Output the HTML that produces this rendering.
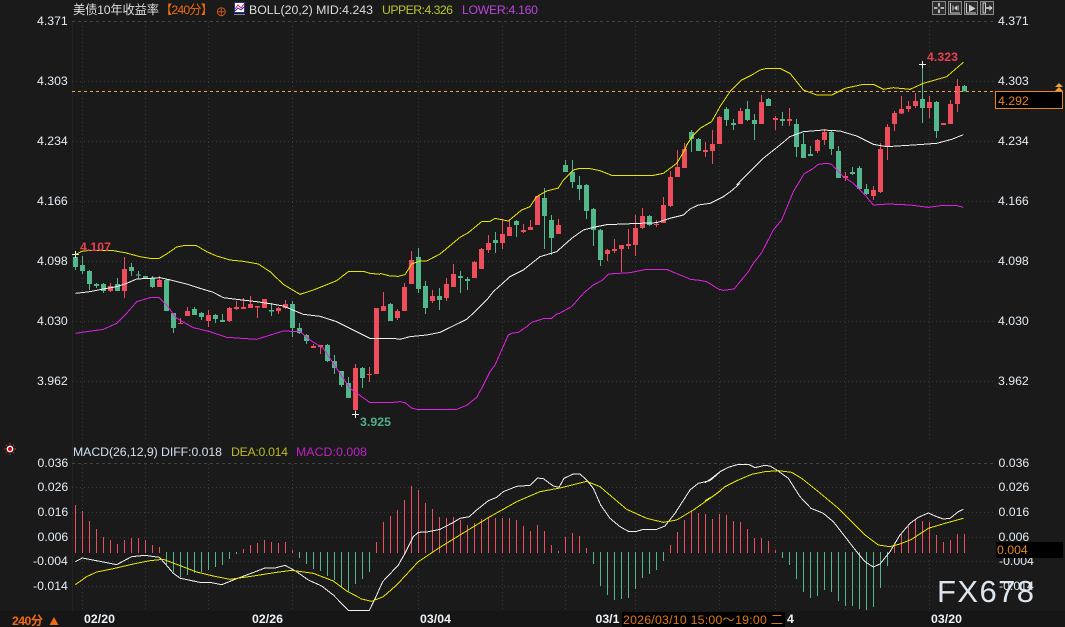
<!DOCTYPE html>
<html lang="zh">
<head>
<meta charset="utf-8">
<title>美债10年收益率</title>
<style>
html,body{margin:0;padding:0;background:#1a1a1a;width:1065px;height:627px;overflow:hidden}
svg{display:block}
text{font-family:"Liberation Sans","Noto Sans CJK SC",sans-serif;font-size:12.3px}
.lab{fill:#e4edf5}
.grid{stroke:#3a3a3a;stroke-width:1;stroke-dasharray:1 3;fill:none}
.w{fill:none;stroke-width:3;shape-rendering:crispEdges}
.b{fill:none;stroke-width:15;shape-rendering:crispEdges}
.bar{fill:none;stroke-width:3;shape-rendering:crispEdges}
.r{stroke:#ee4e5c}
.g{stroke:#52b88b}
.l{fill:none;stroke-width:3;shape-rendering:crispEdges;stroke-linejoin:round}
.lw{stroke:#f0f0f0}
.ly{stroke:#e8e600}
.lm{stroke:#e020e0}
</style>
</head>
<body>
<svg width="1065" height="627" viewBox="0 0 1065 627" xmlns="http://www.w3.org/2000/svg">
<rect width="1065" height="627" fill="#1a1a1a"/>
<rect y="611" width="1065" height="16" fill="#161616"/>
<path d="M72.5 21V611" stroke="#232323" fill="none"/>

<!-- grids -->
<path d="M72 21.5H994" stroke="#444" stroke-dasharray="3 3" fill="none"/>
<path class="grid" d="M72 81.5H994M72 141.5H994M72 201.5H994M72 261.5H994M72 321.5H994M72 381.5H994"/>
<path class="grid" d="M82.5 22V440M145.5 22V440M208.5 22V440M292.5 22V440M418.5 22V440M502.5 22V440M565.5 22V440M635.5 22V440M719.5 22V440M775.5 22V440M845.5 22V440M929.5 22V440"/>
<path d="M72 463.5H994" stroke="#444" stroke-dasharray="3 3" fill="none"/>
<path class="grid" d="M72 487.5H994M72 512.5H994M72 537.5H994M72 561.5H994M72 586.5H994"/>
<path class="grid" d="M82.5 464V611M145.5 464V611M208.5 464V611M292.5 464V611M418.5 464V611M502.5 464V611M565.5 464V611M635.5 464V611M719.5 464V611M775.5 464V611M845.5 464V611M929.5 464V611"/>

<!-- candles group A -->
<g transform="translate(70.1667 230) scale(.33333)">
<path class="w r" d="M121 159V186M163 81V204M268 138V171M331 264V282M352 231V258M415 240V291M478 231V276M499 213V240M520 204V237M541 198V234M562 228V264M583 207V234M625 231V252M646 210V237M730 342V354M751 345V372M856 402V546M898 411V456M919 234V432"/>
<path class="b r" d="M121 168V183M163 117V183M268 150V171M331 279V282M352 243V258M415 255V273M478 234V273M499 231V237M520 231V237M541 222V234M562 228V233M583 207V234M625 234V243M646 222V234M730 348V354M751 345V351M856 414V540M898 432V435M919 234V432"/>
<path class="w g" d="M16 72V120M37 78V132M58 120V180M79 159V174M100 159V189M142 144V183M184 99V138M205 123V147M226 138V147M247 138V174M289 147V243M310 249V309M373 231V255M394 246V270M436 252V279M457 252V276M604 219V258M667 213V321M688 279V312M709 312V342M772 342V396M793 375V432M814 423V471M835 441V504M877 411V474"/>
<path class="b g" d="M16 81V111M37 105V123M58 123V162M79 162V168M100 162V183M142 162V183M184 111V123M205 133V136M226 138V144M247 144V171M289 150V243M310 249V294M373 237V255M394 249V261M436 255V267M457 270V276M604 240V245M667 222V294M688 294V309M709 315V333M772 345V393M793 393V414M814 423V465M835 459V504M877 414V444"/>
</g>
<!-- candles group B -->
<g transform="translate(380.1667 150) scale(.33333)">
<path class="w r" d="M10 426V483M52 477V510M73 399V483M94 303V402M157 420V459M199 384V453M220 342V411M283 333V384M304 294V357M325 255V309M367 207V297M388 207V258M430 222V249M451 210V240M472 138V225M535 207V252M682 297V333M703 267V309M724 285V366M745 237V297M766 195V318M787 174V237M829 210V231M850 141V219M871 63V171M892 0V81"/>
<path class="b r" d="M10 468V483M52 483V504M73 411V483M94 330V402M157 438V453M199 402V444M220 372V411M283 336V384M304 297V357M325 279V300M367 252V279M388 231V258M430 240V246M451 231V240M472 138V225M535 225V252M682 300V312M703 297V303M724 285V297M745 282V288M766 234V285M787 198V234M829 222V225M850 165V219M871 81V168M892 51V81"/>
<path class="w g" d="M31 459V513M115 294V429M136 393V492M178 414V480M241 363V429M262 381V420M346 246V309M409 210V261M493 114V297M514 195V315M556 30V66M577 30V114M598 78V150M619 102V207M640 174V288M661 237V348M808 195V228"/>
<path class="b g" d="M31 462V513M115 321V417M136 408V474M178 438V450M241 378V384M262 387V393M346 270V279M409 213V225M493 144V198M514 210V264M556 45V66M577 66V96M598 105V117M619 105V183M640 177V240M661 240V330M808 198V225"/>
</g>
<!-- candles group C -->
<g transform="translate(680.1667 50) scale(.33333)">
<path class="w r" d="M13 279V354M76 276V321M97 240V342M118 198V282M181 174V222M244 135V222M286 198V240M328 174V228M412 267V309M433 237V285M496 366V393M580 408V450M601 279V429M622 222V330M643 183V243M664 138V192M685 153V186M706 129V174M748 138V204M790 219V225M811 150V222M832 87V186"/>
<path class="b r" d="M13 297V354M76 300V306M97 282V303M118 201V282M181 183V222M244 156V222M286 204V210M328 207V213M412 270V303M433 246V270M496 378V384M580 420V438M601 297V426M622 231V291M643 189V222M664 177V190M685 168V177M706 153V168M748 156V174M790 219V225M811 162V222M832 108V162"/>
<path class="w g" d="M34 240V306M55 264V303M139 171V228M160 207V240M202 153V213M223 192V270M265 144V168M307 186V228M349 207V321M370 249V324M391 288V318M454 240V315M475 288V384M517 351V375M538 348V420M559 402V435M727 42V219M769 153V264M853 105V124"/>
<path class="b g" d="M34 246V267M55 267V303M139 177V210M160 219V225M202 177V210M223 210V222M265 147V168M307 207V213M349 222V291M370 282V324M391 312V318M454 246V297M475 303V384M517 366V372M538 354V417M559 417V432M727 147V174M769 156V243M853 108V124"/>
</g>
<!-- extreme crosses -->
<path d="M72 254.5H79M75.5 251V258M352 414.5H359M355.5 411V418M919 64.5H926M922.5 61V68" stroke="#f0f0f0" fill="none" shape-rendering="crispEdges"/>

<!-- BOLL lines -->
<g transform="translate(70 230) scale(.33333)">
<polyline class="l ly" points="16,74 35,64 60,61 130,62 165,68 210,80 240,85 268,85 290,72 320,51 345,46 378,46 410,65 440,78 480,90 520,94 565,102 600,125 640,163 690,193 730,180 800,152 835,125 880,124 900,130 930,133"/>
<polyline class="l lw" points="16,190 60,185 100,177 140,170 170,160 200,147 240,145 270,143 310,152 350,162 390,175 430,187 460,203 500,208 560,215 600,221 640,228 700,253 750,259 800,275 850,300 900,325 930,325"/>
<polyline class="l lm" points="16,310 50,305 100,298 140,280 170,250 200,215 240,203 268,203 290,225 320,265 370,293 420,305 470,322 560,328 640,303 690,305 720,330 760,355 800,415 840,475 900,518 930,518"/>
</g>
<g transform="translate(380 300) scale(.33333)">
<polyline class="l lw" points="0,115 40,115 60,118 90,110 140,105 180,97 260,58 290,30 320,0"/>
<polyline class="l lm" points="0,307 40,307 60,305 75,308 95,324 110,328 230,328 260,316 290,292 305,265 330,215 345,195 365,150 385,105 395,100 415,97 440,80 455,67 490,56 515,55 530,42 540,40"/>
</g>
<g transform="translate(380 150) scale(.33333)">
<polyline class="l ly" points="0,370 30,378 55,379 75,374 95,342 120,333 140,333 180,312 240,262 265,248 305,215 330,214 345,205 385,213 425,180 450,170 470,140 500,123 535,114 550,90 580,60 600,55 625,55 660,62 695,76 820,76 850,70 890,40 915,0"/>
<polyline class="l lw" points="320,450 340,425 390,380 430,360 480,320 530,305 575,265 610,240 640,232 680,224 830,218 870,205 910,195 930,177"/>
<polyline class="l lm" points="540,489 575,470 610,430 640,405 665,392 685,372 750,368 800,358 860,358 900,375 930,387"/>
</g>
<g transform="translate(690 170) scale(.33333)">
<polyline class="l lm" points="0,328 30,331 50,335 85,357 100,361 132,357 175,305 190,280 215,248 250,180 275,150"/>
<polyline class="l lw" points="0,117 25,105 60,100 100,80 125,62 150,40"/>
</g>
<g transform="translate(680 50) scale(.33333)">
<polyline class="l ly" points="15,300 20,285 40,255 60,235 95,215 120,170 150,125 185,90 215,75 240,60 260,55 300,55 330,70 370,120 410,135 455,135 495,115 550,103 580,103 610,118 640,113 690,118 730,100 800,80 835,50 850,37"/>
<polyline class="l lw" points="170,405 210,365 250,325 290,293 330,260 370,245 430,240 480,243 530,258 580,283 620,290 700,285 770,280 815,268 850,254"/>
<polyline class="l lm" points="305,510 340,425 372,372 400,355 415,343 440,340 455,343 490,380 520,400 555,435 580,465 625,462 690,465 745,472 790,466 830,467 850,472"/>
</g>

<!-- current price dash -->
<path d="M72 91.5H995" stroke="#e9a24a" stroke-dasharray="3 3" fill="none"/>

<!-- MACD bars -->
<g transform="translate(.1667 440) scale(.33333)">
<path class="bar r" d="M226 195V339M247 213V339M268 243V339M289 267V339M310 291V339M331 300V339M352 312V339M373 300V339M394 294V339M415 294V339M436 300V339M457 315V339M478 321V339M730 327V339M751 315V339M772 309V339M793 300V339M814 306V339M835 309V339M856 306V339M877 330V339"/>
<path class="bar g" d="M499 336V372M520 336V396M541 336V411M562 336V405M583 336V399M604 336V396M625 336V390M646 336V381M667 336V375M688 336V357M709 336V342M898 336V354M919 336V372M940 336V387M961 336V393M982 336V408M1003 336V420M1024 336V441M1045 336V456M1066 336V432"/>
</g>
<g transform="translate(360.1667 440) scale(.33333)">
<path class="bar g" d="M7 336V417M28 336V396M700 336V372M721 336V438M742 336V465M763 336V480M784 336V477M805 336V474M826 336V447M847 336V414M868 336V402M889 336V390M910 336V363"/>
<path class="bar r" d="M49 306V339M70 246V339M91 228V339M112 210V339M133 180V339M154 138V339M175 150V339M196 189V339M217 207V339M238 231V339M259 234V339M280 231V339M301 240V339M322 255V339M343 249V339M364 237V339M385 231V339M406 234V339M427 234V339M448 234V339M469 240V339M490 258V339M511 273V339M532 255V339M553 273V339M574 315V339M595 333V339M616 291V339M637 279V339M658 288V339M679 324V339M931 315V339M952 276V339M973 240V339M994 213V339M1015 219V339M1036 231V339M1057 237V339"/>
</g>
<g transform="translate(705.1667 440) scale(.33333)">
<path class="bar r" d="M1 222V339M22 237V339M43 222V339M64 225V339M85 243V339M106 246V339M127 267V339M148 294V339M169 294V339M190 303V339M211 330V339M568 315V339M589 282V339M610 258V339M631 240V339M652 243V339M673 246V339M694 285V339M715 306V339M736 300V339M757 282V339M778 282V339"/>
<path class="bar g" d="M232 336V354M253 336V375M274 336V417M295 336V456M316 336V474M337 336V468M358 336V450M379 336V456M400 336V483M421 336V498M442 336V498M463 336V507M484 336V510M505 336V501M526 336V444M547 336V378"/>
</g>
<!-- MACD lines -->
<g transform="translate(0 440) scale(.33333)">
<polyline class="l lw" points="226,365 247,354 268,358 310,366 350,374 395,350 435,346 478,352 499,375 520,400 541,415 600,427 635,428 665,434 700,420 740,405 795,384 825,384 855,376 890,395 925,420 965,438 1000,465 1045,511 1080,511"/>
<polyline class="l ly" points="226,434 260,410 290,396 340,386 400,372 450,362 490,358 530,373 590,396 640,408 690,418 760,408 830,397 875,391 940,400 1000,423 1040,453 1080,474"/>
</g>
<g transform="translate(360 440) scale(.33333)">
<polyline class="l lw" points="0,511 28,511 48,470 68,425 115,375 135,340 160,290 175,277 200,276 240,268 275,250 300,235 328,230 350,210 385,182 410,172 430,155 470,139 510,136 532,114 550,116 580,138 597,142 612,115 640,102 660,102 680,120 700,145 722,195 750,235 780,260 805,274 830,274 850,268 890,268 915,258 945,220 990,150 1015,130 1050,122 1080,96"/>
<polyline class="l ly" points="0,476 35,484 70,470 110,435 175,365 240,322 300,285 390,230 470,185 540,155 600,144 680,124 720,140 800,208 860,235 910,247 950,240 1000,210 1050,175 1080,153"/>
</g>
<g transform="translate(705 440) scale(.33333)">
<polyline class="l lw" points="45,95 70,82 100,73 130,73 150,83 180,76 195,78 215,90 250,115 285,170 318,205 355,220 385,245 420,290 455,335 480,365 505,381 525,372 555,335 585,285 615,250 640,232 670,219 695,230 715,237 735,235 760,215 775,208"/>
<polyline class="l lw" points="0,128 20,115 45,95"/>
<polyline class="l ly" points="0,182 30,165 60,140 100,120 140,103 180,95 220,92 260,97 290,115 340,155 400,205 440,245 480,285 520,315 555,320 585,312 620,298 670,265 720,250 775,235"/>
</g>

<!-- header -->
<text x="73" y="14" fill="#dedede" textLength="86">美债10年收益率</text>
<text x="160" y="14" fill="#f06a10" textLength="53">【240分】</text>
<circle cx="221.3" cy="11.7" r="4" fill="none" stroke="#c4541a"/>
<path d="M217 11.7H225.5M221.3 7.5V16" stroke="#c4541a" fill="none"/>
<rect x="234.5" y="2.5" width="10" height="10" fill="#fff" stroke="#2a2f9a"/>
<path d="M234 14.5H245" stroke="#8a8a8a"/>
<path d="M235 9L238 5L241 8L244 4" stroke="#e02020" fill="none"/>
<path d="M235 11L238 8L241 10L244 7" stroke="#2030c0" fill="none"/>
<text x="249" y="14" fill="#dedede" textLength="124">BOLL(20,2) MID:4.243</text>
<text x="382" y="14" fill="#b9c42c" textLength="71">UPPER:4.326</text>
<text x="462" y="14" fill="#b847dc" textLength="76">LOWER:4.160</text>

<!-- toolbar -->
<g fill="#2d2d2d" stroke="#8a8a8a">
<rect x="932.5" y="1.5" width="13" height="13"/>
<rect x="948.5" y="1.5" width="13" height="13"/>
<rect x="964.5" y="1.5" width="13" height="13"/>
<rect x="980.5" y="1.5" width="13" height="13"/>
</g>
<path d="M939 3V6.5M939 9.5V13M934 8H937.5M940.5 8H944" stroke="#ddd" stroke-width="1.6" fill="none"/>
<path d="M950.5 3V13H960M953 5.5V10.5M958 5.5V10.5" stroke="#cfcfcf" fill="none"/>
<path d="M954 8L957 5.5V10.5Z" fill="#cfcfcf"/>
<path d="M966.5 3V13H976" stroke="#cfcfcf" fill="none"/>
<path d="M969 4.5L975.5 8.5L969 12Z" fill="#cfcfcf"/>
<path d="M983 3H985.5V13H983Z" fill="none" stroke="#cfcfcf"/>
<path d="M986 8H992" stroke="#cfcfcf" stroke-width="1.6"/>
<path d="M989.5 5L992.5 8L989.5 11Z" fill="#cfcfcf"/>

<!-- left labels main -->
<g class="lab">
<text x="37" y="25">4.371</text>
<text x="37" y="85">4.303</text>
<text x="37" y="145">4.234</text>
<text x="37" y="205">4.166</text>
<text x="37" y="265">4.098</text>
<text x="37" y="325">4.030</text>
<text x="37" y="385">3.962</text>
<text x="998" y="25">4.371</text>
<text x="998" y="85">4.303</text>
<text x="998" y="145">4.234</text>
<text x="998" y="205">4.166</text>
<text x="998" y="265">4.098</text>
<text x="998" y="325">4.030</text>
<text x="998" y="385">3.962</text>
<!-- macd labels -->
<text x="37.5" y="467">0.036</text>
<text x="37.5" y="491">0.026</text>
<text x="37.5" y="516">0.016</text>
<text x="37.5" y="541">0.006</text>
<text x="33" y="565">-0.004</text>
<text x="33" y="590">-0.014</text>
<text x="998.5" y="467">0.036</text>
<text x="998.5" y="491">0.026</text>
<text x="998.5" y="516">0.016</text>
<text x="998.5" y="541">0.006</text>
<text x="999" y="565">-0.004</text>
<text x="999" y="590">-0.014</text>
</g>

<!-- price tag -->
<rect x="995.5" y="91.5" width="67" height="17" fill="#000" stroke="#e8871e"/>
<text x="998" y="105" fill="#e8871e">4.292</text>
<path d="M1059 83L1063 87H1055Z M1059 87L1063 91H1055Z" fill="#f0a030"/>

<!-- extremes -->
<text x="80" y="251" fill="#e8404f" font-weight="bold" textLength="31">4.107</text>
<text x="360" y="426" fill="#4fb08a" font-weight="bold" textLength="31">3.925</text>
<text x="927" y="61" fill="#e8404f" font-weight="bold" textLength="31">4.323</text>

<!-- MACD header -->
<circle cx="10" cy="449" r="3.4" fill="#fff"/>
<circle cx="10" cy="449" r="2" fill="#e00000"/>
<path d="M10 443V444.5M10 453.5V455M4 449H5.5M14.5 449H16M5.8 444.8L6.8 445.8M13.2 452.2L14.2 453.2M14.2 444.8L13.2 445.8M6.8 452.2L5.8 453.2" stroke="#e83030" fill="none"/>
<text x="73" y="456" fill="#cfe0ee" textLength="149">MACD(26,12,9) DIFF:0.018</text>
<text x="231" y="456" fill="#b9bc20" textLength="57">DEA:0.014</text>
<text x="296" y="456" fill="#c021c8" textLength="71">MACD:0.008</text>

<!-- macd value tag -->
<rect x="996" y="542" width="67" height="16" fill="#000"/>
<text x="997" y="554" fill="#e8871e">0.004</text>

<!-- axis -->
<text x="12" y="625" fill="#f06a10" font-weight="bold" textLength="31">240分</text>
<path d="M54 617L58.5 625H49.5Z" fill="#f06a10"/>
<g fill="#eef3f8" font-weight="bold">
<text x="84" y="623" textLength="31">02/20</text>
<text x="252" y="623" textLength="31">02/26</text>
<text x="420" y="623" textLength="31">03/04</text>
<text x="595.5" y="623">03/1</text>
<text x="787" y="623">4</text>
<text x="931" y="623" textLength="31">03/20</text>
</g>
<rect x="622" y="612" width="163" height="15" fill="#000"/>
<text x="623" y="624" fill="#e07810" textLength="160">2026/03/10 15:00～19:00 二</text>

<!-- watermark -->
<text x="937" y="602" fill="#dde5ee" textLength="97" style="font-size:31px">FX678</text>
</svg>
</body>
</html>
